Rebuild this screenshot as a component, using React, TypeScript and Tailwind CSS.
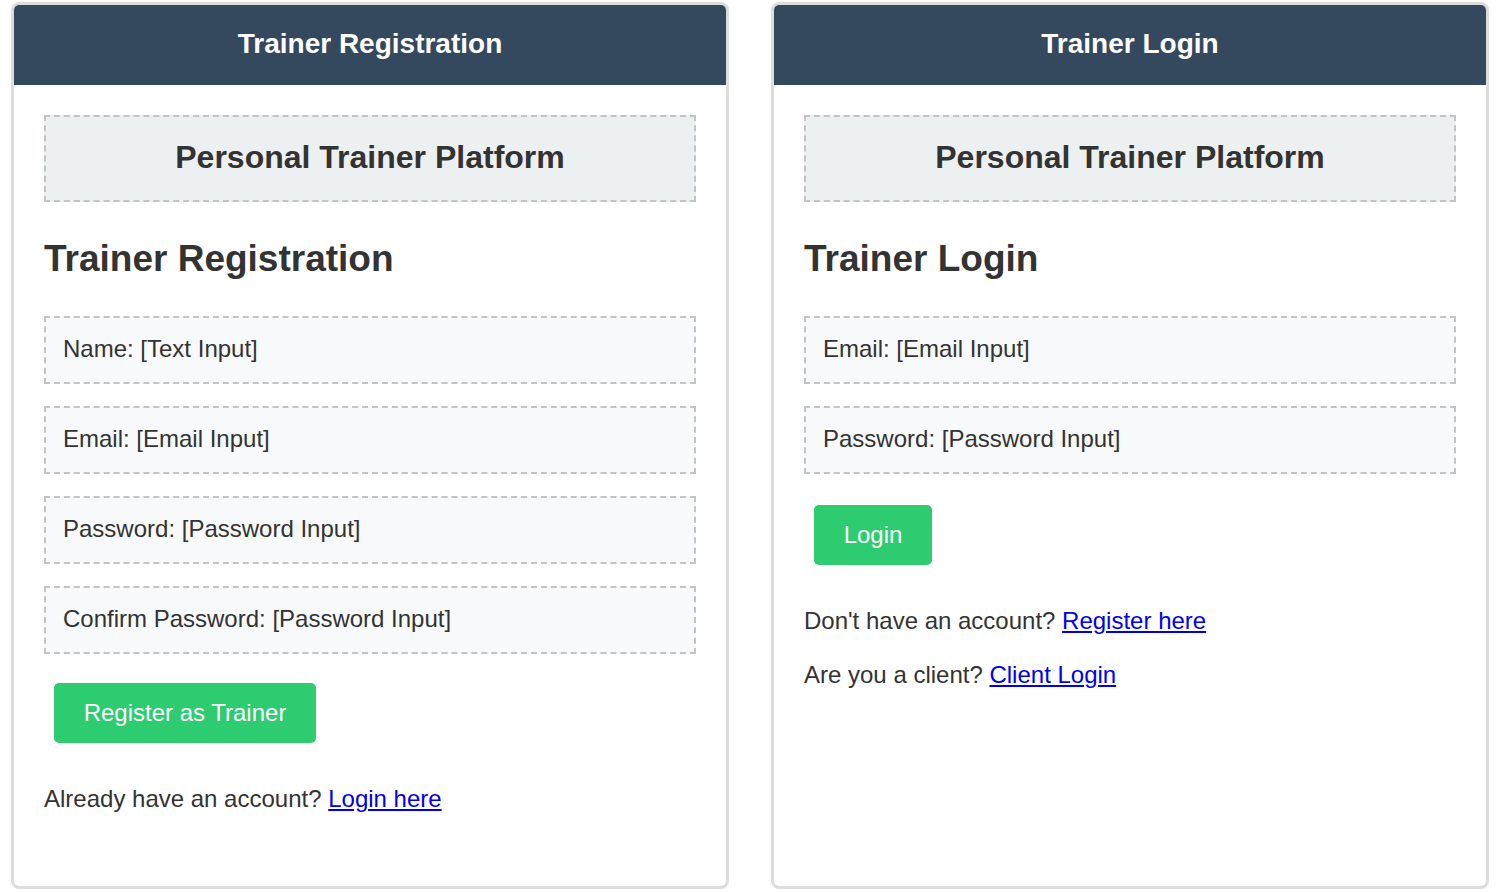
import React from 'react';

const font = "font-['Liberation_Sans',Arial,sans-serif]";

const Field: React.FC<{ label: string; last?: boolean }> = ({ label, last }) => (
  <div
    className={`h-[68px] flex items-center pl-[17px] pb-[3px] bg-[#f8f9fa] border-2 border-dashed border-[#c4c4c4] text-[24px] text-[#333] ${
      last ? '' : 'mb-[22px]'
    }`}
  >
    {label}
  </div>
);

const Panel: React.FC<{ title: string; children: React.ReactNode }> = ({ title, children }) => (
  <div className="w-[718px] h-[887px] border-[3px] border-[#ddd] rounded-[8px] overflow-hidden flex flex-col bg-white">
    <div className="h-[80px] shrink-0 pb-[3px] bg-[#34495e] flex items-center justify-center text-white font-bold text-[28px]">
      {title}
    </div>
    <div className="px-[30px] pt-[30px]">
      <div className="h-[87px] pb-[4px] flex items-center justify-center bg-[#ecf0f1] border-2 border-dashed border-[#c4c4c4] text-[#333] font-bold text-[32px]">
        Personal Trainer Platform
      </div>
      <h2 className="mt-[35px] mb-[35px] h-[44px] leading-[44px] text-[37px] font-bold text-[#333]">{title}</h2>
      {children}
    </div>
  </div>
);

const Link: React.FC<{ children: React.ReactNode }> = ({ children }) => (
  <a href="#" className="text-[#0000ee] underline">
    {children}
  </a>
);

export default function App() {
  return (
    <div className={`${font} min-h-[892px] bg-white flex gap-[42px] pl-[11px] pt-[2px]`}>
      <Panel title="Trainer Registration">
        <Field label="Name: [Text Input]" />
        <Field label="Email: [Email Input]" />
        <Field label="Password: [Password Input]" />
        <Field label="Confirm Password: [Password Input]" last />
        <button className="mt-[29px] ml-[10px] w-[262px] h-[60px] rounded-[5px] bg-[#2ecc71] text-white text-[24px]">
          Register as Trainer
        </button>
        <p className="mt-[42px] text-[24px] text-[#333] leading-[28px]">
          Already have an account? <Link>Login here</Link>
        </p>
      </Panel>
      <Panel title="Trainer Login">
        <Field label="Email: [Email Input]" />
        <Field label="Password: [Password Input]" last />
        <button className="mt-[31px] ml-[10px] w-[118px] h-[60px] rounded-[5px] bg-[#2ecc71] text-white text-[24px]">
          Login
        </button>
        <p className="mt-[42px] text-[24px] text-[#333] leading-[28px]">
          Don't have an account? <Link>Register here</Link>
        </p>
        <p className="mt-[26px] text-[24px] text-[#333] leading-[28px]">
          Are you a client? <Link>Client Login</Link>
        </p>
      </Panel>
    </div>
  );
}
